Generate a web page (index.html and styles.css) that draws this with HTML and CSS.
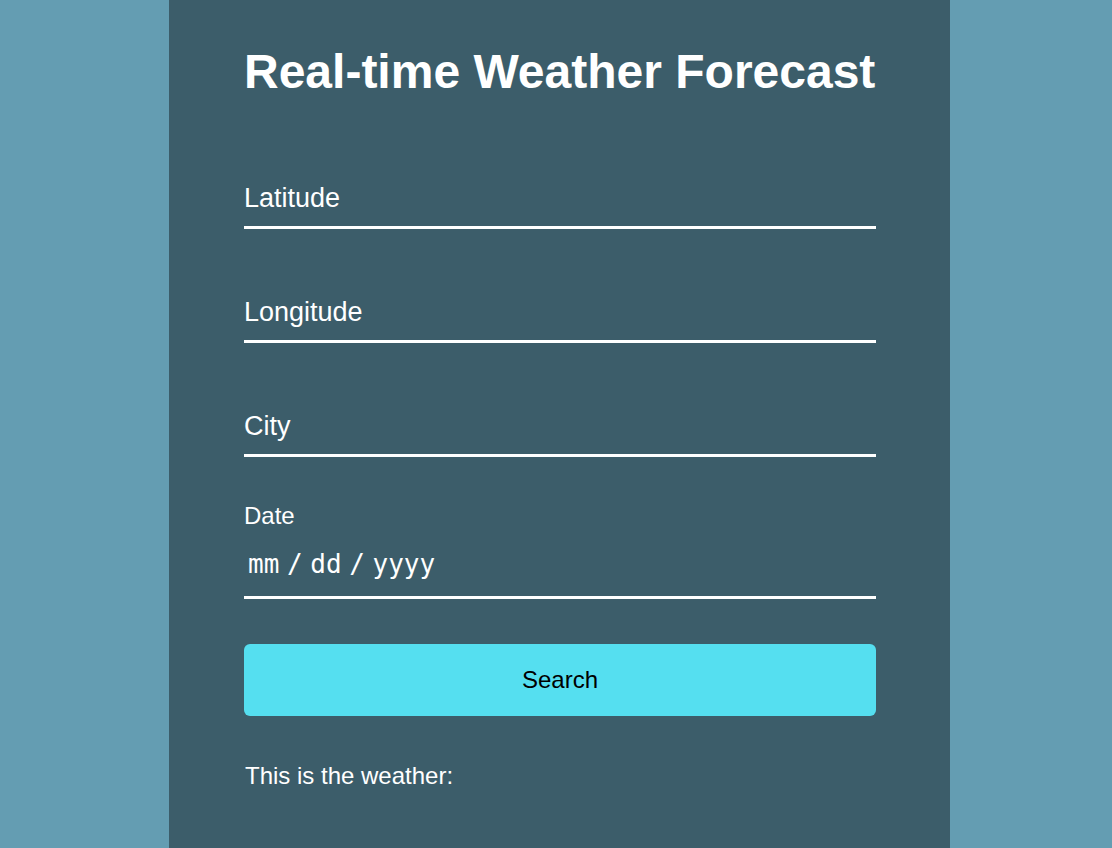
FILE: index.html
```html
<!DOCTYPE html>
<html lang="en">
<head>
<meta charset="utf-8">
<title>Real-time Weather Forecast</title>
<link rel="stylesheet" href="styles.css">
</head>
<body>
<main class="panel">
  <h1 class="title">Real-time Weather Forecast</h1>
  <form class="form">
    <input class="field" type="text" placeholder="Latitude">
    <input class="field" type="text" placeholder="Longitude">
    <input class="field" type="text" placeholder="City">
    <label class="date-label" for="date">Date</label>
    <input class="field date-field" id="date" type="text" placeholder="mm / dd / yyyy">
    <button class="search" type="button">Search</button>
  </form>
  <p class="result">This is the weather:</p>
</main>
</body>
</html>
```
FILE: styles.css
```css
html, body {
  margin: 0;
  padding: 0;
  height: 100%;
}
body {
  background: #649db2;
  font-family: "Liberation Sans", Arial, sans-serif;
  color: #fff;
}
.panel {
  box-sizing: border-box;
  margin-left: 169px;
  width: 781px;
  min-height: 100%;
  background: #3c5d6a;
  padding: 44px 74px 0 75px;
}
.title {
  margin: 0;
  font-size: 48px;
  font-weight: bold;
  line-height: 56px;
  white-space: nowrap;
}
.form {
  display: flex;
  flex-direction: column;
  margin-top: 83px;
}
.field {
  box-sizing: border-box;
  width: 100%;
  background: transparent;
  border: none;
  border-bottom: 3px solid #fff;
  color: #fff;
  font-family: "Liberation Sans", Arial, sans-serif;
  font-size: 27px;
  line-height: 31px;
  height: 46px;
  padding: 0 0 12px 0;
  margin: 0 0 68px 0;
  outline: none;
}
.field::placeholder {
  color: #fff;
  opacity: 1;
}
.date-label {
  font-size: 24px;
  line-height: 28px;
  margin-top: -23px;
}
.date-field {
  font-family: "DejaVu Sans Mono", monospace;
  font-size: 26px;
  word-spacing: -8px;
  line-height: 30px;
  height: 50px;
  padding: 0 0 17px 4px;
  margin: 19px 0 45px 0;
}
.search {
  height: 72px;
  width: 100%;
  border: none;
  border-radius: 6px;
  background: #55dff0;
  color: #000;
  font-family: "Liberation Sans", Arial, sans-serif;
  font-size: 24px;
}
.result {
  margin: 46px 0 0 1px;
  font-size: 24px;
  line-height: 28px;
}
```
